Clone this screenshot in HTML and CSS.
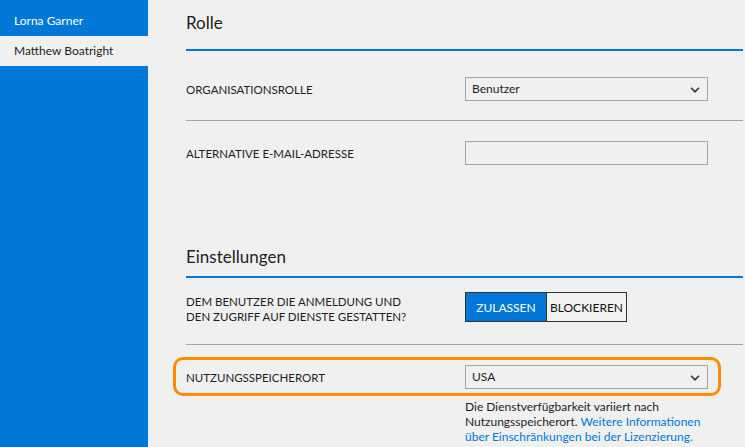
FILE: index.html
```html
<!DOCTYPE html>
<html lang="de">
<head>
<meta charset="utf-8">
<title>Benutzer</title>
<link rel="stylesheet" href="styles.css">
</head>
<body>
<div class="app">
  <nav class="sidebar">
    <div class="user">Lorna Garner</div>
    <div class="user user-selected">Matthew Boatright</div>
  </nav>
  <main class="content">
    <section class="section">
      <h2 class="section-title section-title-role">Rolle</h2>
      <div class="row row-divided row-role">
        <div class="label">ORGANISATIONSROLLE</div>
        <div class="select">
          <span class="select-value">Benutzer</span>
          <svg class="chevron" width="10" height="6" viewBox="0 0 10 6"><polyline points="1,0.8 5,4.8 9,0.8" fill="none" stroke="#333" stroke-width="1.6"/></svg>
        </div>
      </div>
      <div class="row row-email">
        <div class="label">ALTERNATIVE E-MAIL-ADRESSE</div>
        <div class="textbox"></div>
      </div>
    </section>
    <section class="section section-settings">
      <h2 class="section-title section-title-settings">Einstellungen</h2>
      <div class="row row-divided row-access">
        <div class="label label-multi">DEM BENUTZER DIE ANMELDUNG UND<br>DEN ZUGRIFF AUF DIENSTE GESTATTEN?</div>
        <div class="toggle">
          <span class="toggle-btn toggle-on">ZULASSEN</span>
          <span class="toggle-btn toggle-off">BLOCKIEREN</span>
        </div>
      </div>
      <div class="row highlight">
        <div class="label">NUTZUNGSSPEICHERORT</div>
        <div class="select">
          <span class="select-value">USA</span>
          <svg class="chevron" width="10" height="6" viewBox="0 0 10 6"><polyline points="1,0.8 5,4.8 9,0.8" fill="none" stroke="#333" stroke-width="1.6"/></svg>
        </div>
      </div>
      <div class="row row-hint">
        <div></div>
        <p class="hint">Die Dienstverfügbarkeit variiert nach<br>Nutzungsspeicherort. <a class="link" href="#">Weitere Informationen<br>über Einschränkungen bei der Lizenzierung.</a></p>
      </div>
    </section>
  </main>
</div>
</body>
</html>
```

FILE: styles.css
```css
* {
  box-sizing: border-box;
}

html, body {
  margin: 0;
  padding: 0;
  height: 100%;
}

body {
  background: #f0f0f0;
  font-family: Lato, "Open Sans", sans-serif;
  font-size: 12px;
  color: #1e1e1e;
  overflow: hidden;
}

.app {
  display: flex;
  height: 100vh;
}

.sidebar {
  width: 148px;
  flex: 0 0 148px;
  background: #0078d7;
  display: flex;
  flex-direction: column;
}

.user {
  height: 36px;
  padding: 13px 0 0 14px;
  line-height: 15px;
  color: #fff;
}

.user-selected {
  height: 30px;
  padding-top: 7px;
  background: #f0f0f0;
  color: #1e1e1e;
}

.content {
  flex: 1;
  padding: 0 2px 0 38px;
}

.section-title {
  margin: 0;
  font-weight: 400;
  font-size: 17px;
  line-height: 20px;
  color: #1e1e1e;
  border-bottom: 2px solid #0078d7;
}

.section-title-role {
  padding: 13px 0 16px;
}

.section-title-settings {
  padding: 0 0 9px;
}

.section-settings {
  margin-top: 82px;
}

.row {
  display: grid;
  grid-template-columns: 279px 243px;
  align-items: center;
}

.row-divided {
  border-bottom: 1px solid #a3a3a3;
}

.row-role {
  padding: 26px 0 19px;
}

.row-email {
  padding-top: 20px;
}

.row-access {
  grid-template-rows: 30px;
  padding: 14px 0 22px;
  align-items: start;
}

.label {
  font-size: 11.5px;
  line-height: 15px;
  color: #1e1e1e;
}

.label-multi {
  padding-top: 3px;
  line-height: 14.5px;
}

.select {
  height: 24px;
  border: 1px solid #a6a6a6;
  display: flex;
  align-items: center;
  justify-content: space-between;
  padding: 0 7px 0 6px;
}

.select-value {
  line-height: 15px;
  padding-bottom: 2px;
}

.chevron {
  display: block;
  margin-top: 2px;
}

.textbox {
  height: 24px;
  border: 1px solid #a6a6a6;
}

.toggle {
  display: flex;
  width: max-content;
  height: 30px;
  border: 1px solid #333;
}

.toggle-btn {
  display: flex;
  align-items: center;
  justify-content: center;
  line-height: 15px;
}

.toggle-on {
  width: 81px;
  background: #0078d7;
  color: #fff;
  border-right: 1px solid #333;
}

.toggle-off {
  width: 79px;
  background: #f2f2f2;
  color: #111;
}

.highlight {
  width: max-content;
  margin: 12px 0 0 -13px;
  padding: 5px 10px 4px;
  border: 3px solid #ff8c00;
  border-radius: 10px;
}

.row-hint {
  margin-top: 3px;
  align-items: start;
}

.hint {
  margin: 0;
  line-height: 15px;
  color: #1e1e1e;
}

.link {
  color: #0078d7;
  text-decoration: none;
}
```
